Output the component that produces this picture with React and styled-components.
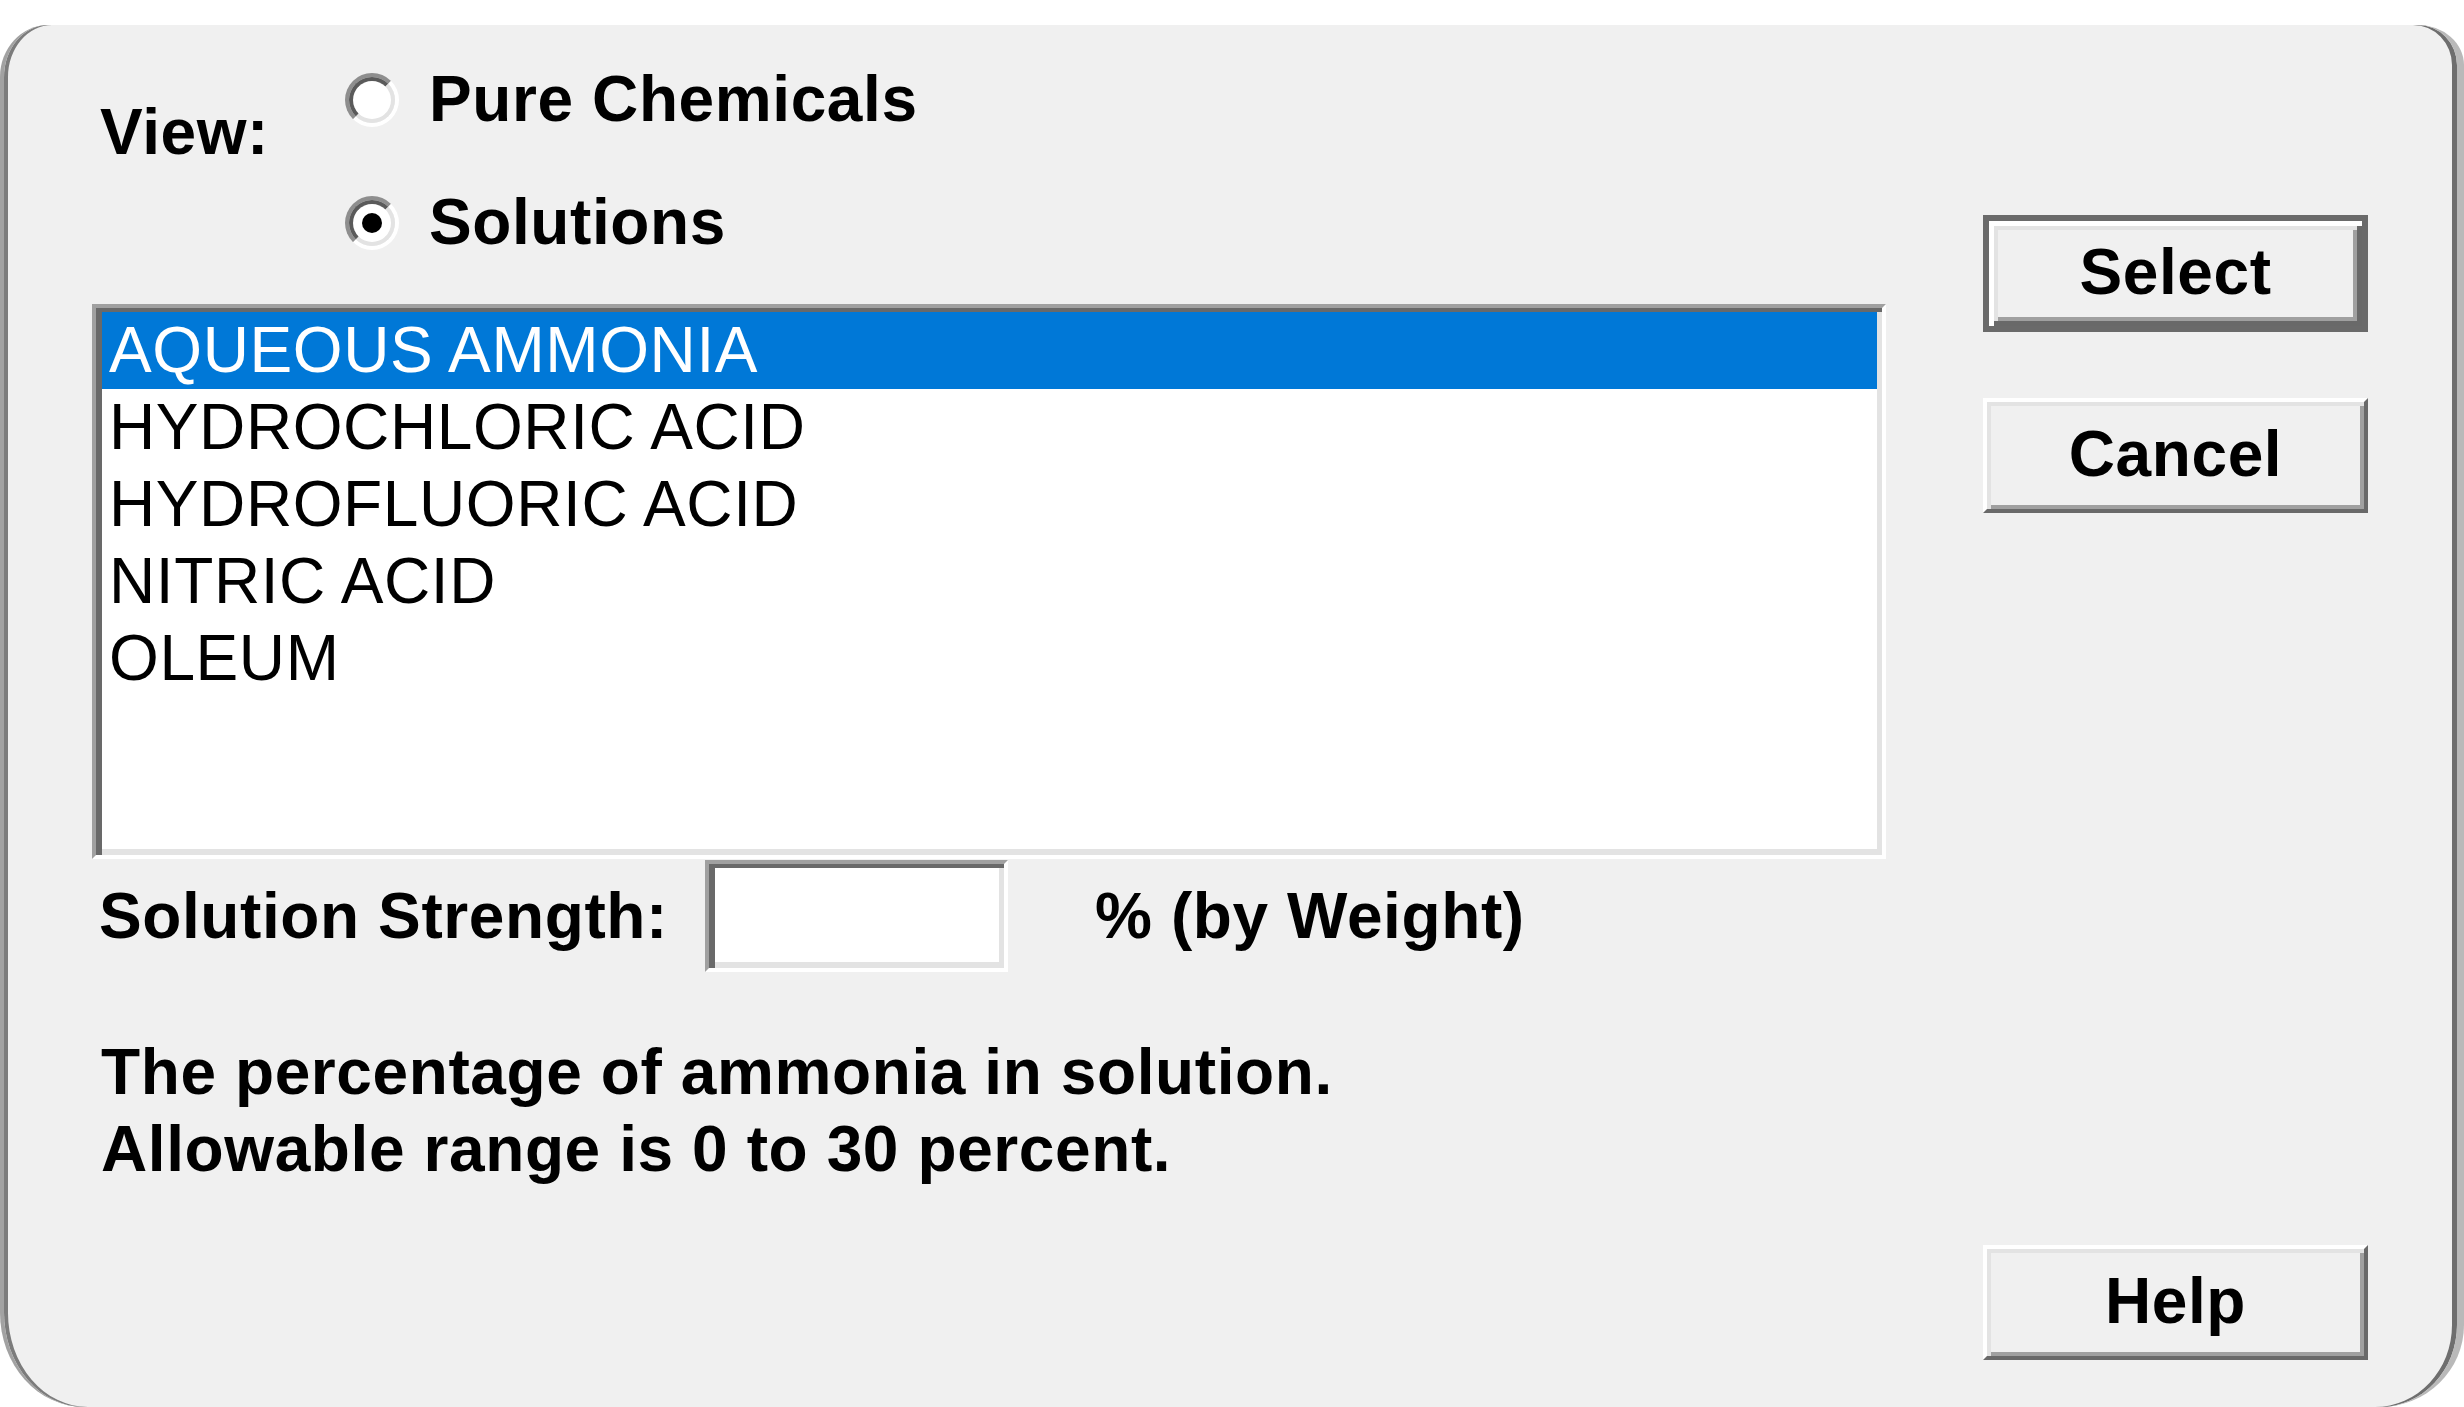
import styled, { createGlobalStyle, css } from "styled-components";

const GlobalStyle = createGlobalStyle`
  html, body {
    margin: 0;
    padding: 0;
    background: #ffffff;
  }
  body {
    font-family: "Liberation Sans", Arial, sans-serif;
    color: #000000;
    letter-spacing: 0.6px;
  }
`;

// classic 3D sunken edge used by the list and the text field
const sunken = css`
  box-sizing: border-box;
  border-style: solid;
  border-width: 4px;
  border-color: #a0a0a0 #ffffff #ffffff #a0a0a0;
  box-shadow: inset 6px 4px 0 #696969, inset -5px -6px 0 #e3e3e3;
  background: #ffffff;
`;

const Dialog = styled.div`
  box-sizing: border-box;
  margin-top: 25px;
  height: 1382px;
  background: #f0f0f0;
  border-left: 4px solid #a2a2a2;
  border-right: 7px solid #b9b9b9;
  box-shadow: inset 4px 0 0 #7c7c7c, inset -5px 0 0 #6e6e6e;
  border-radius: 48px 46px 84px 84px / 52px 40px 82px 94px;
  display: flex;
  padding: 36px 89px 0 88px;
  gap: 97px;
  overflow: hidden;
`;

const LeftColumn = styled.div`
  width: 1794px;
  display: flex;
  flex-direction: column;
`;

const RightColumn = styled.div`
  width: 385px;
  display: flex;
  flex-direction: column;
`;

const Text = styled.span`
  font-size: 64px;
  line-height: 77px;
  font-weight: ${(p) => (p.$bold ? 700 : 400)};
  white-space: nowrap;
`;

const ViewRow = styled.div`
  display: flex;
  align-items: flex-start;
`;

const ViewLabel = styled(Text)`
  width: 253px;
  box-sizing: border-box;
  padding-left: 8px;
  margin-top: 33px;
`;

const RadioGroup = styled.div`
  display: flex;
  flex-direction: column;
  gap: 46px;
`;

const RadioRow = styled.label`
  display: flex;
  align-items: center;
  height: 77px;
  gap: 30px;
`;

const RadioOuter = styled.span`
  box-sizing: border-box;
  width: 54px;
  height: 54px;
  border-radius: 50%;
  border: 4px solid;
  border-color: #8e8e8e #ffffff #ffffff #8e8e8e;
  display: flex;
`;

const RadioInner = styled.span`
  box-sizing: border-box;
  flex: 1;
  border-radius: 50%;
  border: 4px solid;
  border-color: #5a5a5a #e3e3e3 #e3e3e3 #5a5a5a;
  background: #ffffff;
  display: flex;
  align-items: center;
  justify-content: center;
`;

const Dot = styled.span`
  width: 20px;
  height: 20px;
  border-radius: 50%;
  background: #000000;
`;

const ListBox = styled.ul`
  ${sunken};
  margin: 43px 0 0;
  padding: 4px 5px 6px 6px;
  height: 555px;
  list-style: none;
`;

const ListItem = styled.li`
  height: 77px;
  font-size: 64px;
  line-height: 77px;
  padding-left: 7px;
  white-space: nowrap;
  background: ${(p) => (p.$selected ? "#0078d7" : "transparent")};
  color: ${(p) => (p.$selected ? "#ffffff" : "#000000")};
`;

const StrengthRow = styled.div`
  display: flex;
  align-items: center;
  height: 112px;
  margin-top: 1px;
`;

const StrengthLabel = styled(Text)`
  width: 613px;
  box-sizing: border-box;
  padding-left: 7px;
`;

const Field = styled.input`
  ${sunken};
  width: 303px;
  height: 112px;
  padding: 0 12px;
  font-family: inherit;
  font-size: 64px;
  outline: none;
`;

const Unit = styled(Text)`
  margin-left: 87px;
`;

const Description = styled.p`
  margin: 62px 0 0;
  padding-left: 9px;
  font-size: 64px;
  line-height: 77px;
  font-weight: 700;
  white-space: nowrap;
`;

const Button = styled.button`
  box-sizing: border-box;
  width: 385px;
  height: ${(p) => (p.$default ? "117px" : "115px")};
  margin-top: ${(p) => p.$top || "0"};
  margin-bottom: ${(p) => p.$bottom || "0"};
  padding: 0 0 4px;
  background: #f0f0f0;
  font-family: inherit;
  font-size: 64px;
  font-weight: 700;
  letter-spacing: 0.6px;
  color: #000000;
  display: flex;
  align-items: center;
  justify-content: center;
  border-style: solid;
  ${(p) =>
    p.$default
      ? css`
          border-width: 6px;
          border-color: #6a6a6a;
          box-shadow: inset 5px 5px 0 #ffffff, inset -5px -5px 0 #696969,
            inset 9px 9px 0 #e3e3e3, inset -9px -9px 0 #a0a0a0;
        `
      : css`
          border-width: 4px;
          border-color: #ffffff #696969 #696969 #ffffff;
          box-shadow: inset 4px 4px 0 #e3e3e3, inset -4px -4px 0 #a0a0a0;
        `}
`;

const chemicals = [
  "AQUEOUS AMMONIA",
  "HYDROCHLORIC ACID",
  "HYDROFLUORIC ACID",
  "NITRIC ACID",
  "OLEUM",
];

const Radio = ({ checked, children }) => (
  <RadioRow>
    <RadioOuter>
      <RadioInner>{checked && <Dot />}</RadioInner>
    </RadioOuter>
    <Text $bold>{children}</Text>
  </RadioRow>
);

const App = () => {
  return (
    <>
      <GlobalStyle />
      <Dialog>
        <LeftColumn>
          <ViewRow>
            <ViewLabel $bold>View:</ViewLabel>
            <RadioGroup>
              <Radio>Pure Chemicals</Radio>
              <Radio checked>Solutions</Radio>
            </RadioGroup>
          </ViewRow>
          <ListBox>
            {chemicals.map((name, i) => (
              <ListItem key={name} $selected={i === 0}>
                {name}
              </ListItem>
            ))}
          </ListBox>
          <StrengthRow>
            <StrengthLabel $bold>Solution Strength:</StrengthLabel>
            <Field type="text" defaultValue="" />
            <Unit $bold>% (by Weight)</Unit>
          </StrengthRow>
          <Description>
            The percentage of ammonia in solution.
            <br />
            Allowable range is 0 to 30 percent.
          </Description>
        </LeftColumn>
        <RightColumn>
          <Button $default $top="154px">
            Select
          </Button>
          <Button $top="66px">Cancel</Button>
          <Button $top="auto" $bottom="47px">
            Help
          </Button>
        </RightColumn>
      </Dialog>
    </>
  );
};

export default App;
